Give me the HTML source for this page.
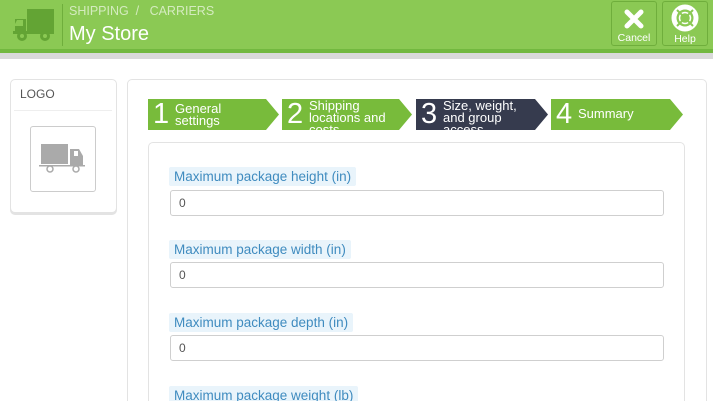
<!DOCTYPE html>
<html><head><meta charset="utf-8"><style>
*{box-sizing:border-box;margin:0;padding:0}
html,body{width:713px;height:401px;overflow:hidden}
body{background:#fff;font-family:"Liberation Sans",sans-serif}
#w{position:relative;width:713px;height:401px;overflow:hidden}
.a{position:absolute}
.hdr{left:0;top:0;width:713px;height:49px;background:#8bc954}
.hl{left:0;top:49px;width:713px;height:4px;background:#72b83f}
.gb{left:0;top:53px;width:713px;height:6px;background:#d9d9d9}
.bc{left:69px;top:4px;font-size:12.5px;color:#d4ebbf}
.ttl{left:69px;top:23px;font-size:20px;color:#fff}
.btn{top:1px;width:46px;height:45px;border:1px solid #6fae3c;border-radius:3px;color:#fff;font-size:10.5px;text-align:center}
.panel{border:1px solid #e3e3e3;border-radius:5px;background:#fff}
.open{border-bottom:none;border-radius:5px 5px 0 0}
.step{top:99px;height:31px;color:#fff}
.step .n{position:absolute;left:5px;top:0;font-size:29px;line-height:31px}
.step .t{position:absolute;left:27px;top:1px;font-size:13px;line-height:12px;overflow:hidden;height:30px}
.lbl{left:169px;height:19px;background:#e9f4fb;color:#3f8bbf;font-size:13.5px;line-height:19px;padding:0 5px;border-radius:2px}
.inp{left:170px;width:494px;height:26px;border:1px solid #cfcfcf;border-radius:3px;font-size:12px;color:#555;padding:5px 8px;line-height:14px}
</style></head><body><div id="w">
<div class="a hdr"></div><div class="a hl"></div><div class="a gb"></div>
<svg class="a" style="left:13px;top:9px" width="42" height="33" viewBox="0 0 42 33"><path d="M14 0h27v24H14zM2 10h11v14H2z" fill="#63a434"/><path d="M4 11l6 0 0 6-9 0z" fill="#8bc954"/><rect x="0" y="22" width="41" height="3" fill="#63a434"/><circle cx="9" cy="27" r="5" fill="#63a434"/><circle cx="32" cy="27" r="5" fill="#63a434"/><circle cx="9" cy="27" r="2" fill="#8bc954"/><circle cx="32" cy="27" r="2" fill="#8bc954"/></svg>
<div class="a" style="left:62px;top:4px;width:1px;height:42px;background:#6fae3c"></div>
<div class="a bc">SHIPPING &nbsp;/ &nbsp; CARRIERS</div>
<div class="a ttl">My Store</div>
<div class="a btn" style="left:611px"><svg width="22" height="22" viewBox="0 0 22 22" style="margin-top:6px"><path d="M4 4L18 18M18 4L4 18" stroke="#fff" stroke-width="5" stroke-linecap="round"/></svg><div style="margin-top:-1px">Cancel</div></div>
<div class="a btn" style="left:662px"><svg width="30" height="30" viewBox="0 0 30 30" style="margin-top:1px"><circle cx="15" cy="15" r="11" fill="none" stroke="#fff" stroke-width="5"/><circle cx="15" cy="15" r="5.5" fill="none" stroke="#fff" stroke-width="1.5"/><path d="M7 7l5 5M23 7l-5 5M7 23l5-5M23 23l-5-5" stroke="#8bc954" stroke-width="2"/></svg><div style="margin-top:-3px">Help</div></div>

<div class="a panel" style="left:10px;top:79px;width:107px;height:134px;box-shadow:0 2px 0 #e3e3e3"></div>
<div class="a" style="left:20px;top:87px;font-size:12px;color:#555">LOGO</div>
<div class="a" style="left:14px;top:110px;width:98px;height:1px;background:#eee"></div>
<div class="a" style="left:30px;top:126px;width:66px;height:66px;border:1px solid #ccc;border-radius:3px"></div>
<svg class="a" style="left:39px;top:143px" width="48" height="32" viewBox="0 0 48 32"><rect x="2" y="1" width="27" height="20" fill="#aaa"/><path d="M31 6h9l4 7v9H31z" fill="#aaa"/><rect x="35" y="8" width="4" height="5" fill="#fff"/><rect x="0" y="22" width="46" height="1.5" fill="#aaa"/><circle cx="11" cy="26" r="3" fill="#fff" stroke="#aaa" stroke-width="1.5"/><circle cx="37" cy="26" r="3" fill="#fff" stroke="#aaa" stroke-width="1.5"/></svg>

<div class="a panel open" style="left:127px;top:79px;width:580px;height:322px"></div>

<svg class="a" style="left:148px;top:99px" width="536" height="31">
<polygon points="0,0 118,0 131,15.5 118,31 0,31" fill="#78bb3b"/>
<polygon points="134,0 251,0 264,15.5 251,31 134,31" fill="#78bb3b"/>
<polygon points="268,0 387,0 400,15.5 387,31 268,31" fill="#363b4e"/>
<polygon points="403,0 522,0 535,15.5 522,31 403,31" fill="#78bb3b"/>
</svg>
<div class="a step" style="left:148px;width:120px"><span class="n">1</span><span class="t" style="top:4px">General<br>settings</span></div>
<div class="a step" style="left:282px;width:120px"><span class="n">2</span><span class="t">Shipping<br>locations and<br>costs</span></div>
<div class="a step" style="left:416px;width:120px"><span class="n">3</span><span class="t">Size, weight,<br>and group<br>access</span></div>
<div class="a step" style="left:551px;width:120px"><span class="n">4</span><span class="t" style="top:9px">Summary</span></div>

<div class="a panel open" style="left:148px;top:142px;width:537px;height:259px"></div>
<div class="a lbl" style="top:167px">Maximum package height (in)</div>
<div class="a inp" style="top:190px">0</div>
<div class="a lbl" style="top:240px">Maximum package width (in)</div>
<div class="a inp" style="top:262px">0</div>
<div class="a lbl" style="top:313px">Maximum package depth (in)</div>
<div class="a inp" style="top:335px">0</div>
<div class="a lbl" style="top:386px;height:15px;border-radius:2px 2px 0 0">Maximum package weight (lb)</div>
</div></body></html>
